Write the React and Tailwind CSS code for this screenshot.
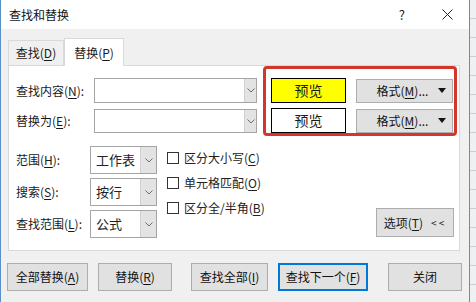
import React from "react";

const U = ({ children }) => <span className="underline underline-offset-2">{children}</span>;

const Chevron = () => (
  <svg width="8" height="5" viewBox="0 0 8 5" fill="none">
    <path d="M0.5 0.5 L4 4 L7.5 0.5" stroke="#6d6d6d" strokeWidth="1" />
  </svg>
);

const Combo = ({ w, h }) => (
  <div className={`flex border border-[#a5a5a5] bg-white ${w} ${h}`}>
    <div className="flex-1" />
    <div className="w-[12px] bg-[#e3e3e3] border-l border-[#cfcfcf] flex items-center justify-center">
      <Chevron />
    </div>
  </div>
);

const Select = ({ text, h }) => (
  <div className={`flex w-[67px] border border-[#a5a5a5] bg-white ${h}`}>
    <div className="flex-1 flex items-center pl-[5px] text-[13px] text-[#222]">{text}</div>
    <div className="w-[16px] bg-[#e3e3e3] border-l border-[#cfcfcf] flex items-center justify-center">
      <Chevron />
    </div>
  </div>
);

const Check = ({ children }) => (
  <div className="flex items-center h-[25px]">
    <div className="w-[12px] h-[12px] border border-[#333] bg-white mr-[5px]" />
    <span className="text-[12px] text-[#222]">{children}</span>
  </div>
);

const Btn = ({ w, children, focus }) => (
  <div
    className={`${w} h-[28px] flex items-center justify-center text-[12px] text-[#111] bg-[#e1e1e1] ${
      focus ? "border-2 border-[#0078d7]" : "border border-[#adadad]"
    }`}
  >
    {children}
  </div>
);

const FormatBtn = () => (
  <div className="w-[97px] h-[24px] bg-[#e1e1e1] border border-[#adadad] flex items-center text-[12px] text-[#111]">
    <span className="flex-1 text-center pl-[10px]">
      格式(<U>M</U>)...
    </span>
    <svg width="8" height="5" viewBox="0 0 8 5" className="mr-[6px]">
      <path d="M0 0 L8 0 L4 5 Z" fill="#111" />
    </svg>
  </div>
);

export default function App() {
  return (
    <div className="w-[476px] h-[302px] flex overflow-hidden font-['Microsoft_YaHei','Noto_Sans_CJK_SC',sans-serif] text-[#1a1a1a]">
      <div className="w-[469px] h-full flex flex-col border-l border-[#5b8fc7]">
        {/* Title bar */}
        <div className="h-[29px] bg-white flex items-center pl-[8px] shrink-0">
          <span className="text-[12px] text-[#111]">查找和替换</span>
          <span className="ml-auto text-[13px] text-[#222] mr-[37px]">?</span>
          <svg width="11" height="11" viewBox="0 0 11 11" className="mr-[16px]">
            <path d="M0.5 0.5 L10.5 10.5 M10.5 0.5 L0.5 10.5" stroke="#222" strokeWidth="1" />
          </svg>
        </div>
        {/* Body */}
        <div className="flex-1 bg-[#f0f0f0] pl-[7px] flex flex-col">
          {/* Tabs */}
          <div className="flex items-end h-[36px] pt-[9px]">
            <div className="w-[56px] h-[25px] border border-b-0 border-[#d9d9d9] bg-[#f0f0f0] flex items-center justify-center text-[12px]">
              查找(<U>D</U>)
            </div>
            <div className="w-[60px] h-[28px] border border-b-0 border-[#d9d9d9] bg-white flex items-center justify-center text-[12px] -mb-px relative z-10">
              替换(<U>P</U>)
            </div>
          </div>
          {/* Panel */}
          <div className="w-[452px] h-[186px] border border-[#d9d9d9] bg-white flex flex-col">
            <div className="flex">
              <div className="w-[248px] flex flex-col pt-[12px] gap-[6px]">
                <div className="flex items-center">
                  <span className="w-[85px] shrink-0 pl-[7px] text-[12px]">
                    查找内容(<U>N</U>):
                  </span>
                  <Combo w="w-[163px]" h="h-[25px]" />
                </div>
                <div className="flex items-center">
                  <span className="w-[85px] shrink-0 pl-[7px] text-[12px]">
                    替换为(<U>E</U>):
                  </span>
                  <Combo w="w-[163px]" h="h-[24px]" />
                </div>
              </div>
              <div className="ml-[6px] w-[194px] h-[70px] border-[3px] border-[#d2362c] rounded-[4px] flex flex-col pl-[5px] pt-[9px] gap-[5px]">
                <div className="flex items-center">
                  <div className="w-[75px] h-[25px] bg-[#ffff00] border border-black flex items-center justify-center text-[14px]">
                    预览
                  </div>
                  <div className="ml-[10px]">
                    <FormatBtn />
                  </div>
                </div>
                <div className="flex items-center">
                  <div className="w-[75px] h-[25px] bg-white border border-black flex items-center justify-center text-[14px]">
                    预览
                  </div>
                  <div className="ml-[10px]">
                    <FormatBtn />
                  </div>
                </div>
              </div>
            </div>
            <div className="flex mt-[10px]">
              <div className="flex flex-col gap-[4px]">
                <div className="flex items-center">
                  <span className="w-[81px] shrink-0 pl-[7px] text-[12px]">
                    范围(<U>H</U>):
                  </span>
                  <Select text="工作表" h="h-[28px]" />
                </div>
                <div className="flex items-center">
                  <span className="w-[81px] shrink-0 pl-[7px] text-[12px]">
                    搜索(<U>S</U>):
                  </span>
                  <Select text="按行" h="h-[28px]" />
                </div>
                <div className="flex items-center">
                  <span className="w-[81px] shrink-0 pl-[7px] text-[12px]">
                    查找范围(<U>L</U>):
                  </span>
                  <Select text="公式" h="h-[28px]" />
                </div>
              </div>
              <div className="ml-[10px] flex flex-col mt-[-1px]">
                <Check>
                  区分大小写(<U>C</U>)
                </Check>
                <Check>
                  单元格匹配(<U>O</U>)
                </Check>
                <Check>
                  区分全/半角(<U>B</U>)
                </Check>
              </div>
              <div className="ml-auto mr-[5px] self-end mb-[1px]">
                <div className="w-[78px] h-[29px] bg-[#e1e1e1] border border-[#adadad] flex items-center justify-center text-[12px]">
                  选项(<U>T</U>)<span className="ml-[8px] text-[10px] tracking-[2px]">&lt;&lt;</span>
                </div>
              </div>
            </div>
          </div>
          {/* Buttons */}
          <div className="flex mt-[12px] -ml-px">
            <Btn w="w-[81px]">
              全部替换(<U>A</U>)
            </Btn>
            <div className="ml-[10px]">
              <Btn w="w-[74px]">
                替换(<U>R</U>)
              </Btn>
            </div>
            <div className="ml-[19px]">
              <Btn w="w-[77px]">
                查找全部(<U>I</U>)
              </Btn>
            </div>
            <div className="ml-[10px]">
              <Btn w="w-[90px]" focus>
                查找下一个(<U>F</U>)
              </Btn>
            </div>
            <div className="ml-[20px]">
              <Btn w="w-[74px]">关闭</Btn>
            </div>
          </div>
        </div>
      </div>
      {/* Spreadsheet edge */}
      <div className="flex-1 h-full border-l border-[#5b8fc7] bg-[#eef1f4] flex flex-col">
        {Array.from({ length: 16 }).map((_, i) => (
          <div key={i} className="h-[19px] shrink-0 border-b border-[#c8ced6]" />
        ))}
      </div>
    </div>
  );
}
